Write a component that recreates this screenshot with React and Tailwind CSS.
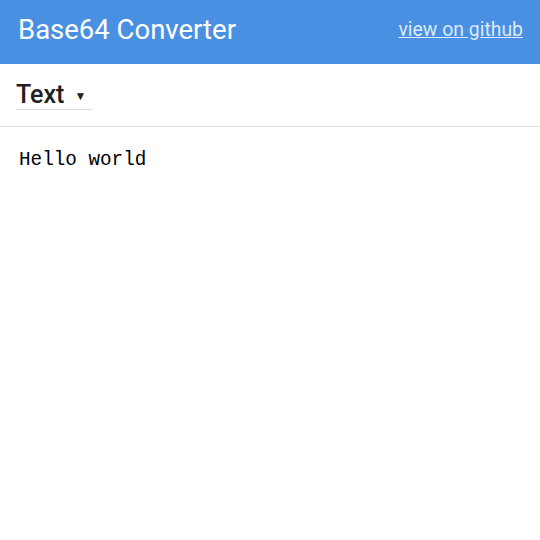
export default function App() {
  return (
    <div className="min-h-[540px] bg-white" style={{ fontFamily: 'Roboto, sans-serif' }}>
      {/* Header */}
      <header className="h-[64px] bg-[#4a90e2] flex items-center justify-between pl-[18px] pr-[17px]">
        <h1 className="text-[27.5px] text-white font-normal leading-none mt-[-4px]">Base64 Converter</h1>
        <a href="#" className="text-[19.4px] text-[#dce9fa] underline leading-none mt-[-4px]">view on github</a>
      </header>

      {/* Format select */}
      <div className="h-[63px] border-b border-[#e0e0e0] pl-4 flex items-start pt-[17px]">
        <div className="flex items-center gap-[10px] w-[76px] h-[29px] border-b border-[#dddddd] pb-[2px]">
          <span className="text-[25px] font-medium text-[#212121] leading-none">Text</span>
          <span className="text-[12px] text-[#212121] leading-none mt-[3px]">▼</span>
        </div>
      </div>

      {/* Input */}
      <textarea
        className="block w-full h-[400px] px-[19px] pt-[24px] text-[19.3px] text-black leading-none resize-none outline-none"
        style={{ fontFamily: '"Liberation Mono", monospace' }}
        defaultValue="Hello world"
      />
    </div>
  )
}
